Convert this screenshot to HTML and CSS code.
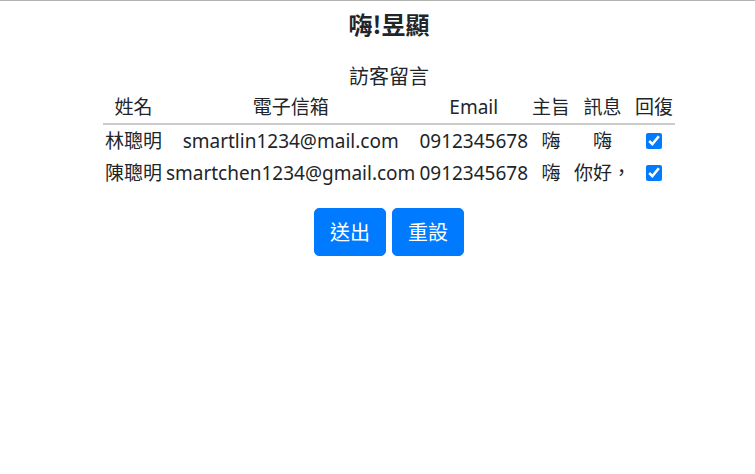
FILE: index.html
```html
<!DOCTYPE html>
<html lang="zh-Hant">
<head>
<meta charset="utf-8">
<title>訪客留言</title>
<link rel="stylesheet" href="styles.css">
</head>
<body>
<div class="page">
  <h1 class="title">嗨!昱顯</h1>
  <form class="guest-form">
    <table class="guest-table">
      <caption class="guest-caption">訪客留言</caption>
      <thead>
        <tr>
          <th>姓名</th>
          <th>電子信箱</th>
          <th>Email</th>
          <th>主旨</th>
          <th>訊息</th>
          <th>回復</th>
        </tr>
      </thead>
      <tbody>
        <tr>
          <td>林聰明</td>
          <td>smartlin1234@mail.com</td>
          <td>0912345678</td>
          <td>嗨</td>
          <td>嗨</td>
          <td><input class="check" type="checkbox" checked></td>
        </tr>
        <tr>
          <td>陳聰明</td>
          <td>smartchen1234@gmail.com</td>
          <td>0912345678</td>
          <td>嗨</td>
          <td>你好，</td>
          <td><input class="check" type="checkbox" checked></td>
        </tr>
      </tbody>
    </table>
    <div class="actions">
      <button type="button" class="btn">送出</button>
      <button type="reset" class="btn">重設</button>
    </div>
  </form>
</div>
</body>
</html>
```

FILE: styles.css
```css
html, body {
  margin: 0;
  padding: 0;
  background: #fff;
}
body {
  font-family: "Noto Sans", "Noto Sans CJK TC", sans-serif;
  color: #212529;
  font-size: 19px;
  border-top: 1px solid #b3b3b3;
}
.page {
  display: flex;
  flex-direction: column;
  align-items: center;
  padding-left: 23px;
}
.title {
  font-family: "Noto Sans CJK TC", sans-serif;
  font-size: 24px;
  font-weight: 700;
  line-height: 28px;
  margin: 9px 0 24px;
}
.guest-form {
  display: flex;
  flex-direction: column;
  align-items: center;
}
.guest-table {
  border-collapse: collapse;
  font-size: 19px;
}
.guest-caption {
  line-height: 28px;
  padding-bottom: 1px;
  font-family: "Noto Sans CJK TC", sans-serif;
  font-size: 20px;
}
.guest-table th,
.guest-table td {
  font-weight: 400;
  text-align: center;
  padding: 2px 2px;
  line-height: 28px;
  white-space: nowrap;
}
.guest-table thead th {
  border-bottom: 2px solid #cccccc;
}
.check {
  width: 16px;
  height: 16px;
  margin: 0;
  vertical-align: -1px;
  accent-color: #007bff;
}
.actions {
  display: flex;
  gap: 6px;
  margin-top: 19px;
}
.btn {
  font-family: "Noto Sans CJK TC", sans-serif;
  font-size: 20px;
  line-height: 22px;
  padding: 12px 15px;
  color: #fff;
  background: #007bff;
  border: 1px solid #007bff;
  border-radius: 5px;
  cursor: pointer;
}
```
